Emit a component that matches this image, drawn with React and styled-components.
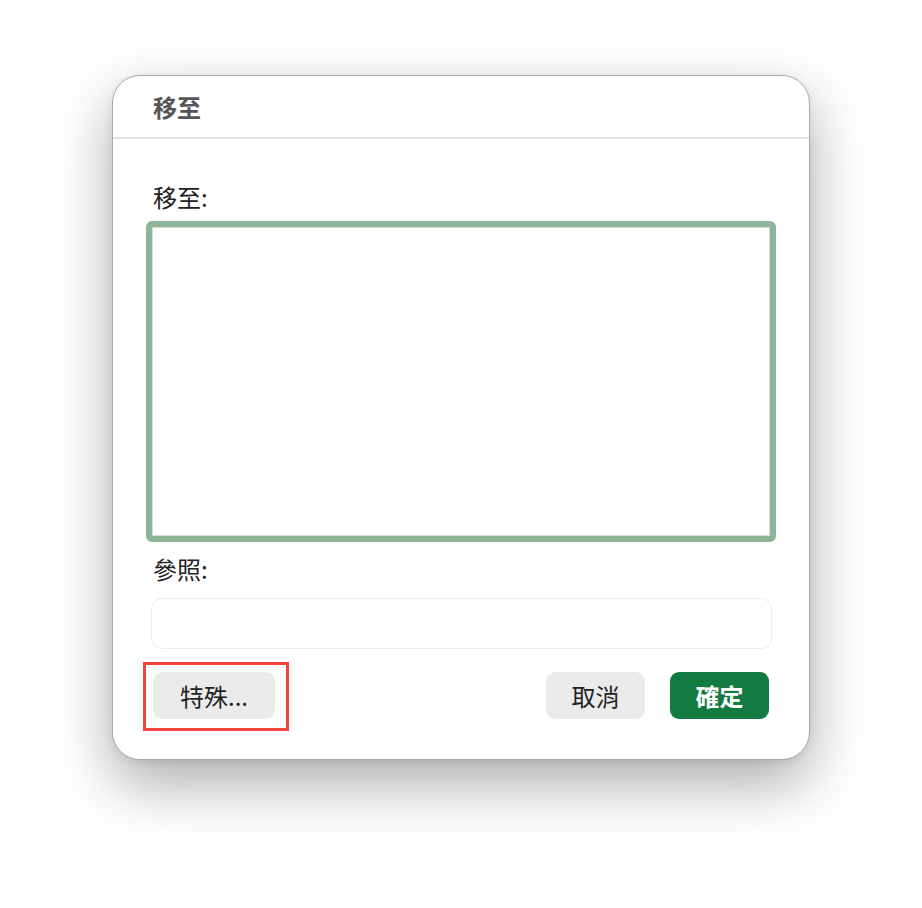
import React from 'react';
import styled, { createGlobalStyle } from 'styled-components';

const GlobalStyle = createGlobalStyle`
  html, body {
    margin: 0;
    background: #ffffff;
  }
  * {
    box-sizing: border-box;
  }
`;

const Page = styled.div`
  width: 922px;
  height: 908px;
  display: flex;
  justify-content: center;
  align-items: flex-start;
  padding-top: 75px;
  font-family: "Noto Sans CJK TC", "Noto Sans", sans-serif;
`;

const Dialog = styled.div`
  width: 698px;
  height: 685px;
  background: #ffffff;
  border: 1px solid #a9a9a9;
  border-radius: 28px;
  box-shadow: 0 24px 60px rgba(0, 0, 0, 0.33), 0 2px 8px rgba(0, 0, 0, 0.08);
  display: flex;
  flex-direction: column;
  overflow: hidden;
`;

const Header = styled.div`
  height: 63px;
  padding: 0 40px;
  border-bottom: 2px solid #e2e2e2;
  display: flex;
  align-items: center;
`;

const Title = styled.h1`
  margin: 0;
  font-size: 24px;
  font-weight: 700;
  color: #555555;
  line-height: 30px;
`;

const Body = styled.div`
  flex: 1;
  padding: 43px 40px 40px;
  display: flex;
  flex-direction: column;
`;

const Label = styled.div`
  font-size: 24px;
  line-height: 30px;
  color: #222222;
  margin-bottom: ${({ gap }) => gap}px;
`;

const ListBox = styled.div`
  height: 321px;
  margin: 0 -7px 12px -7px;
  border: 6px solid #8db596;
  border-radius: 6px;
  box-shadow: inset 0 0 0 1px #d9d9d9;
  background: #ffffff;
`;

const TextField = styled.div`
  height: 51px;
  margin: 0 -3px 23px -2px;
  border: 1px solid #ececec;
  border-radius: 11px;
  background: #ffffff;
`;

const Footer = styled.div`
  display: flex;
  align-items: center;
  gap: 25px;
`;

const Spacer = styled.div`
  flex: 1;
`;

const Button = styled.button`
  width: ${({ w }) => w}px;
  height: 47px;
  border: none;
  border-radius: 9px;
  font-family: inherit;
  font-size: 24px;
  font-weight: ${({ primary }) => (primary ? 700 : 400)};
  color: ${({ primary }) => (primary ? '#ffffff' : '#222222')};
  background: ${({ primary }) => (primary ? '#137b41' : '#ebebeb')};
  display: flex;
  align-items: center;
  justify-content: center;
  padding: 0;
`;

const Highlight = styled.div`
  position: relative;
`;

const RedFrame = styled.div`
  position: absolute;
  top: -10px;
  left: -10px;
  right: -14px;
  bottom: -12px;
  border: 3px solid #f5443b;
  pointer-events: none;
`;

export default function App() {
  return (
    <>
      <GlobalStyle />
      <Page>
        <Dialog>
          <Header>
            <Title>移至</Title>
          </Header>
          <Body>
            <Label gap={9}>移至:</Label>
            <ListBox />
            <Label gap={14}>參照:</Label>
            <TextField />
            <Footer>
              <Highlight>
                <Button w={122}>特殊...</Button>
                <RedFrame />
              </Highlight>
              <Spacer />
              <Button w={99}>取消</Button>
              <Button w={99} primary>確定</Button>
            </Footer>
          </Body>
        </Dialog>
      </Page>
    </>
  );
}
